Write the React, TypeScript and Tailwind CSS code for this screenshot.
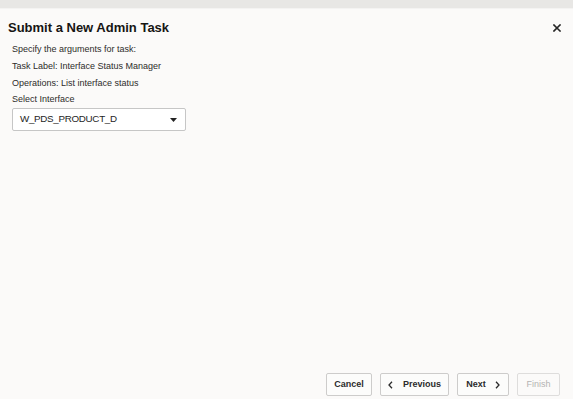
import React from "react";

function CloseIcon() {
  return (
    <svg width="8" height="8" viewBox="0 0 8 8" className="block">
      <path d="M1 1 L7 7 M7 1 L1 7" stroke="#262626" strokeWidth="1.6" strokeLinecap="square" />
    </svg>
  );
}

function Caret() {
  return (
    <svg width="7" height="4" viewBox="0 0 7 4" className="block">
      <path d="M0 0 H7 L3.5 4 Z" fill="#222" />
    </svg>
  );
}

function Chevron({ dir }: { dir: "left" | "right" }) {
  return (
    <svg width="5" height="8" viewBox="0 0 5 8" className="block">
      <path
        d={dir === "left" ? "M4 0.8 L1 4 L4 7.2" : "M1 0.8 L4 4 L1 7.2"}
        stroke="#2b2b2b"
        strokeWidth="1.3"
        fill="none"
      />
    </svg>
  );
}

export default function App() {
  return (
    <div className="flex h-[399px] w-full flex-col overflow-hidden bg-[#fbfaf9] font-['Liberation_Sans',Arial,sans-serif] text-[#2d2c2a]">
      {/* top strip */}
      <div className="h-[8px] shrink-0 bg-[#e8e7e5]" />
      <div className="h-px shrink-0 bg-[#f4f3f2]" />

      {/* header */}
      <div className="flex items-center justify-between pt-[10px] pr-[12px] pl-[8px]">
        <h2 className="text-[13px] leading-[18px] font-bold text-[#161513]">Submit a New Admin Task</h2>
        <CloseIcon />
      </div>

      {/* body */}
      <div className="flex flex-col pt-[4px] pl-[12px] text-[9px]">
        <p className="leading-[17px]">Specify the arguments for task:</p>
        <p className="leading-[17px]">Task Label: Interface Status Manager</p>
        <p className="leading-[17px]">Operations: List interface status</p>
        <p className="leading-[14px]">Select Interface</p>
        <div className="mt-[2px] flex h-[23px] w-[174px] items-center justify-between rounded-[2px] border border-[#c6c6c6] bg-white pr-[8px] pl-[7px]">
          <span className="text-[9.8px] tracking-[-0.3px] text-[#1e1e1e]">W_PDS_PRODUCT_D</span>
          <Caret />
        </div>
      </div>

      <div className="flex-1" />

      {/* footer buttons */}
      <div className="flex justify-end gap-2 pr-[13px] pb-[3px] text-[9px] font-bold">
        <button className="flex h-[23px] w-[46px] items-center justify-center rounded-[2px] border border-[#cdcccb] bg-[#fcfcfb] text-[#2b2b2b]">
          Cancel
        </button>
        <button className="flex h-[23px] w-[69px] items-center justify-center gap-[10px] rounded-[2px] border border-[#cdcccb] bg-[#fcfcfb] text-[#2b2b2b]">
          <Chevron dir="left" />
          <span>Previous</span>
        </button>
        <button className="flex h-[23px] w-[52px] items-center justify-center gap-[9px] rounded-[2px] border border-[#cdcccb] bg-[#fcfcfb] text-[#2b2b2b]">
          <span>Next</span>
          <Chevron dir="right" />
        </button>
        <button className="flex h-[23px] w-[43px] items-center justify-center rounded-[2px] border border-[#dedddc] bg-[#fbfaf9] font-normal text-[#b4b3b2]">
          Finish
        </button>
      </div>
    </div>
  );
}
